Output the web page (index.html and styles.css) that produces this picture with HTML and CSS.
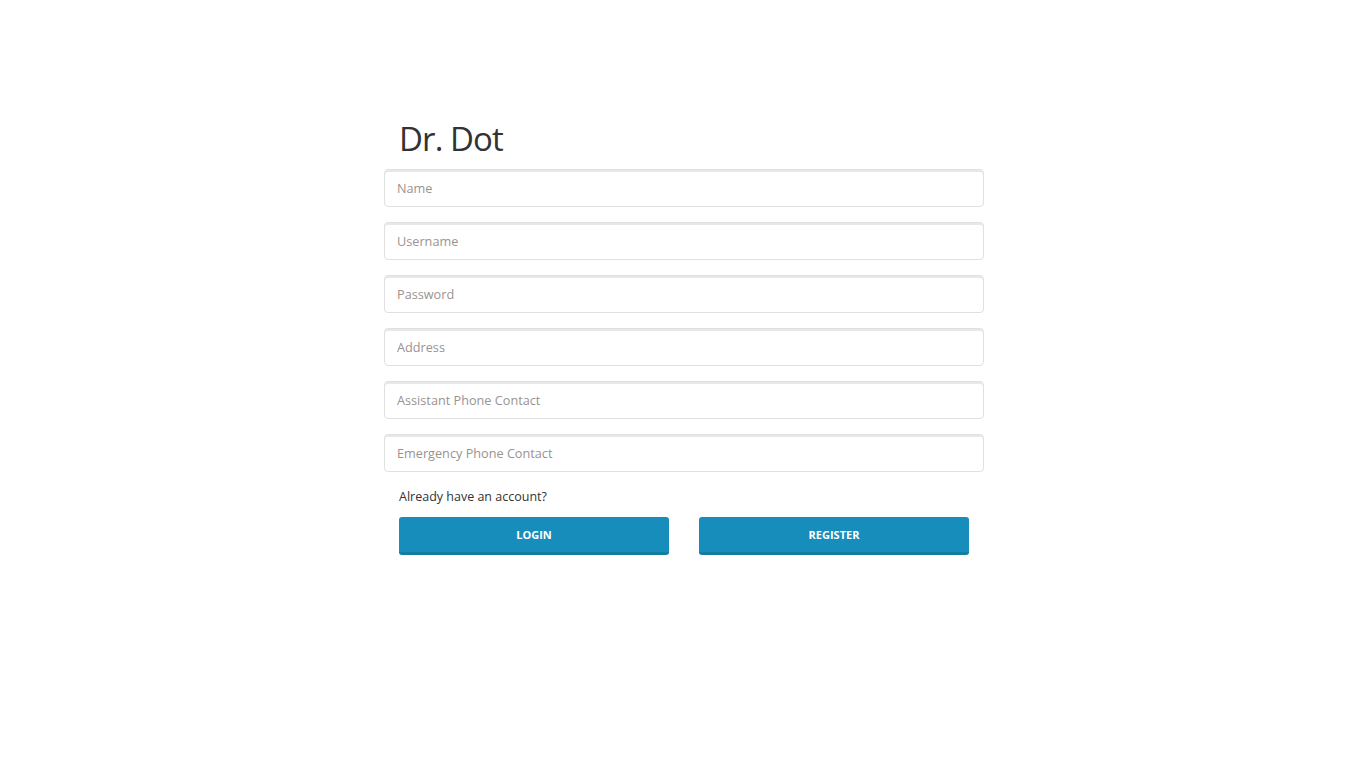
FILE: index.html
```
<!DOCTYPE html>
<html>
<head>
<meta charset="utf-8">
<link rel="stylesheet" href="styles.css">
</head>
<body>
<div class="wrap">
  <h1 class="title">Dr. Dot</h1>
  <form class="form">
    <input class="field" type="text" placeholder="Name">
    <input class="field" type="text" placeholder="Username">
    <input class="field" type="password" placeholder="Password">
    <input class="field" type="text" placeholder="Address">
    <input class="field" type="text" placeholder="Assistant Phone Contact">
    <input class="field" type="text" placeholder="Emergency Phone Contact">
    <p class="note">Already have an account?</p>
    <div class="actions">
      <button type="button" class="btn">LOGIN</button>
      <button type="button" class="btn">REGISTER</button>
    </div>
  </form>
</div>
</body>
</html>
```
FILE: styles.css
```
html, body {
  margin: 0;
  padding: 0;
  background: #fff;
}
body {
  font-family: "Open Sans", "Liberation Sans", sans-serif;
  color: #333;
}
.wrap {
  width: 600px;
  margin: 0 auto;
  padding-top: 116px;
}
.title {
  margin: 0 0 8px 0;
  padding-left: 15px;
  font-size: 33px;
  font-weight: 400;
  line-height: 45px;
  color: #333;
  letter-spacing: -0.9px;
}
.form {
  display: flex;
  flex-direction: column;
  gap: 15px;
}
.field {
  box-sizing: border-box;
  width: 600px;
  height: 38px;
  margin: 0;
  padding: 0 12px;
  border: 1px solid #e0e0e0;
  border-radius: 4px;
  box-shadow: inset 0 2px 0 #e8e8e8;
  font-family: inherit;
  font-size: 12.7px;
  color: #555;
  outline: none;
}
.field::placeholder {
  color: #9a9390;
}
.note {
  margin: 0;
  padding-left: 15px;
  font-size: 12.5px;
  line-height: 20px;
  color: #333;
}
.actions {
  display: grid;
  grid-template-columns: 1fr 1fr;
  gap: 30px;
  padding: 0 15px;
  margin-top: -5px;
}
.btn {
  height: 38px;
  border: none;
  border-bottom: 3px solid #137ca3;
  border-radius: 3px;
  background: #178dbb;
  color: #fff;
  font-family: inherit;
  font-weight: 700;
  font-size: 11px;
  padding: 0;
}
```
